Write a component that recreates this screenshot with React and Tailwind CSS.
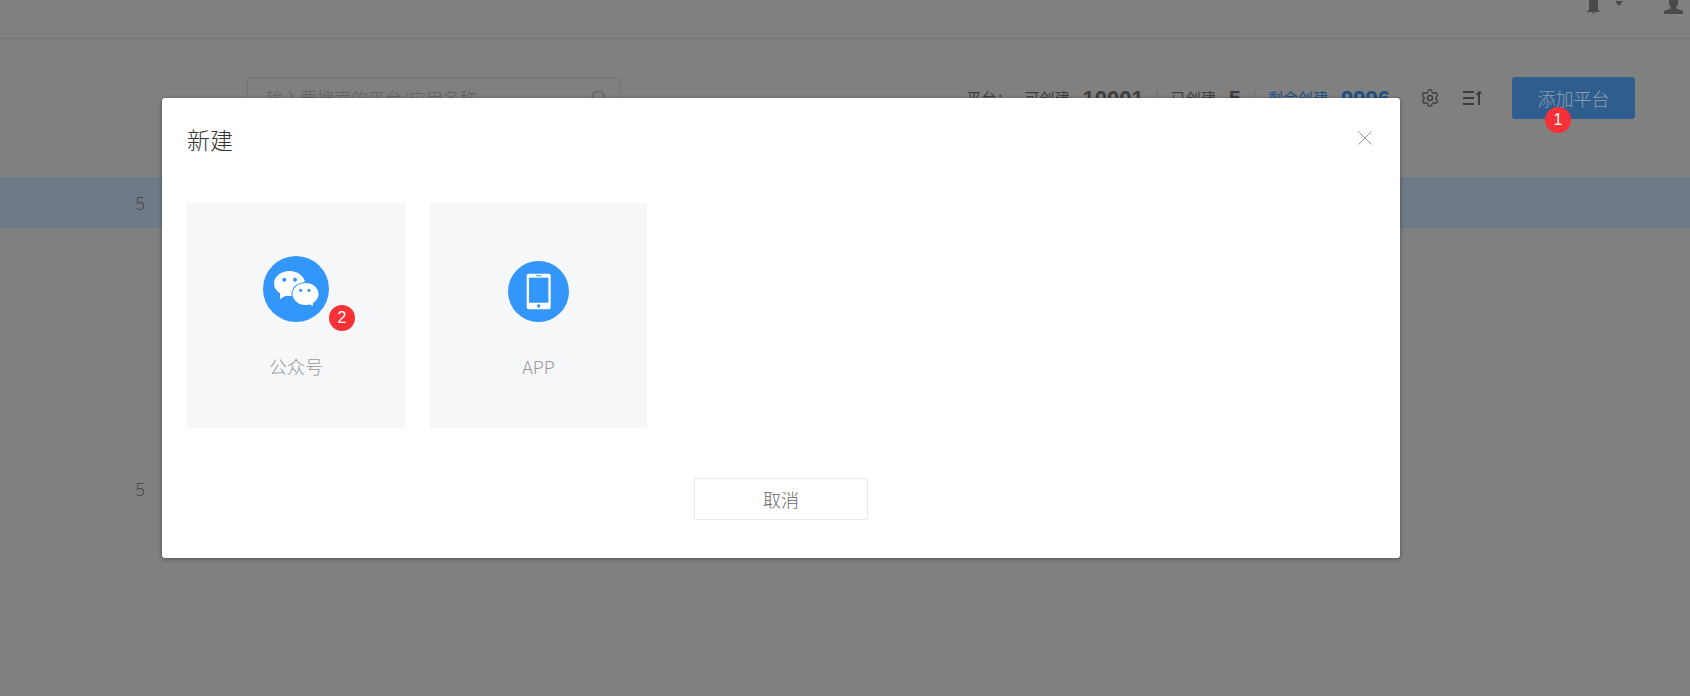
import { Settings, Search } from 'lucide-react';

const font = { fontFamily: '"Noto Sans CJK SC", "Liberation Sans", sans-serif' };

function Badge({ children, className }) {
  return (
    <span className={`absolute flex h-[26px] w-[26px] items-center justify-center rounded-full bg-[#f53137] font-['Liberation_Sans'] text-[16px] text-white ${className}`}>
      {children}
    </span>
  );
}

function WechatIcon() {
  return (
    <svg viewBox="0 0 66 66" className="h-[66px] w-[66px]">
      <circle cx="33" cy="33" r="33" fill="#3396fb" />
      <ellipse cx="26.5" cy="27.5" rx="15.5" ry="12.5" fill="#fff" />
      <path d="M17 36l0 7 7-4z" fill="#fff" />
      <ellipse cx="42.5" cy="38" rx="14" ry="12" fill="#3396fb" />
      <ellipse cx="42.5" cy="38" rx="13" ry="11" fill="#fff" />
      <path d="M44 47l6 3-.5-6z" fill="#fff" />
      <circle cx="21.3" cy="23.7" r="2" fill="#3396fb" />
      <circle cx="32" cy="23.7" r="2" fill="#3396fb" />
      <circle cx="37.7" cy="34.3" r="1.6" fill="#3396fb" />
      <circle cx="46" cy="34.3" r="1.6" fill="#3396fb" />
    </svg>
  );
}

function PhoneIcon() {
  return (
    <svg viewBox="0 0 61 61" className="h-[61px] w-[61px]">
      <circle cx="30.5" cy="30.5" r="30.5" fill="#3396fb" />
      <rect x="18.7" y="12.7" width="24" height="35.6" rx="1.8" fill="#fff" />
      <rect x="21" y="16.7" width="19.4" height="25" fill="#3396fb" />
      <rect x="28" y="14.2" width="5.4" height="1" rx="0.5" fill="#3396fb" />
      <circle cx="30.7" cy="45" r="1.7" fill="#3396fb" />
    </svg>
  );
}

function SortIcon() {
  return (
    <svg viewBox="0 0 19 14" className="h-[14px] w-[19px]" fill="none" stroke="#3c3c3c" strokeWidth="2">
      <path d="M0 1h11M0 7h11M0 13h11" />
      <path d="M16 14V2" />
      <path d="M13.5 4L16 1l2.5 1" strokeWidth="1.5" />
    </svg>
  );
}

function Card({ label, children }) {
  return (
    <div className="flex h-[225px] flex-col items-center bg-[#f6f7f9]">
      <div className="flex h-[121px] items-end pb-[2px]">{children}</div>
      <div className="mt-[16px] text-[18px] leading-[52px] text-[#999999] font-light">{label}</div>
    </div>
  );
}

export default function App() {
  return (
    <div style={font} className="relative h-[696px] w-full overflow-hidden bg-[#808080] text-[#3e3e3e]">
      {/* page behind the dialog */}
      <header className="relative flex h-[39px] items-start justify-end border-b border-[#737373] pr-[7px]">
        <div className="absolute inset-x-0 top-[33px] h-px bg-[#7b7b7b]" />
        <svg viewBox="0 0 15 14" className="h-[14px] w-[15px]" fill="#4a4a4a">
          <path d="M3 0h9v10l3 2H0l3-2zM5.5 12.5h4L7.5 14z" />
        </svg>
        <svg viewBox="0 0 8 5" className="ml-[14px] mt-[1px] h-[5px] w-[8px]" fill="#4a4a4a">
          <path d="M0 0h8L4 5z" />
        </svg>
        <svg viewBox="0 0 19 14" className="ml-[41px] h-[14px] w-[19px]" fill="#4a4a4a">
          <path d="M5 0h9v3c0 2-1 4-2.500 5l7.500 3v3H0v-3l7.500-3C6 7 5 5 5 3z" />
        </svg>
      </header>

      <div className="flex h-[138px] items-start pl-[247px] pr-[55px] pt-[38px]">
        <div className="flex h-[42px] w-[374px] items-center justify-between rounded-[3px] border border-[#737373] pl-[18px] pr-[12px] font-light">
          <span className="text-[17px] text-[#606060]">输入要搜索的平台/应用名称</span>
          <Search className="h-[18px] w-[18px] text-[#606060]" strokeWidth={1.5} />
        </div>

        <div className="ml-auto flex h-[42px] items-center text-[15px]">
          <span>平台：</span>
          <span className="ml-[13px]">可创建</span>
          <b className="ml-[13px] font-['Liberation_Sans'] text-[22px] font-bold">10001</b>
          <span className="ml-[13px] h-[16px] w-px bg-[#707070]" />
          <span className="ml-[13px]">已创建</span>
          <b className="ml-[13px] font-['Liberation_Sans'] text-[22px] font-bold">5</b>
          <span className="ml-[13px] h-[16px] w-px bg-[#707070]" />
          <span className="ml-[13px] text-[#1f4f85]">剩余创建</span>
          <b className="ml-[13px] font-['Liberation_Sans'] text-[22px] font-bold text-[#1f4f85]">9996</b>
          <Settings className="ml-[30px] h-[20px] w-[20px] text-[#3c3c3c]" strokeWidth={1.6} />
          <span className="ml-[23px]"><SortIcon /></span>
        </div>

        <button className="ml-[30px] h-[42px] w-[123px] rounded-[3px] bg-[#2f5e8e] text-[18px] font-light text-[#8d9fb3]">
          添加平台
        </button>
      </div>

      <div className="flex h-[51px] items-center justify-end bg-[#6f7a87] pr-[1545px] text-[18px] font-light text-[#4a4a4a]">5</div>
      <div className="flex h-[51px] mt-[235px] items-center justify-end pr-[1545px] text-[18px] font-light text-[#4a4a4a]">5</div>

      {/* dialog */}
      <div className="absolute left-[162px] top-[98px] h-[460px] w-[1238px] rounded-[3px] bg-white px-[25px] shadow-[0_1px_4px_rgba(0,0,0,0.4)]">
        <div className="flex h-[105px] items-start justify-between">
          <h2 className="mt-[25px] text-[23px] font-light leading-[32px] text-[#333333]">新建</h2>
          <svg viewBox="0 0 14 14" className="mr-[3px] mt-[33px] h-[14px] w-[14px]" stroke="#999999" strokeWidth="1" fill="none">
            <path d="M0.500 0.500l13 13M13.500 0.500l-13 13" />
          </svg>
        </div>

        <div className="grid grid-cols-[218px_217px] gap-[25px]">
          <div className="relative">
            <Card label="公众号"><WechatIcon /></Card>
            <Badge className="left-[142px] top-[102px]">2</Badge>
          </div>
          <Card label="APP"><PhoneIcon /></Card>
        </div>

        <div className="mt-[50px] flex justify-center">
          <button className="h-[42px] w-[174px] rounded-[2px] border border-[#e8e8e8] text-[18px] font-light text-[#666666]">
            取消
          </button>
        </div>
      </div>

      <Badge className="left-[1545px] top-[107px]">1</Badge>
    </div>
  );
}
